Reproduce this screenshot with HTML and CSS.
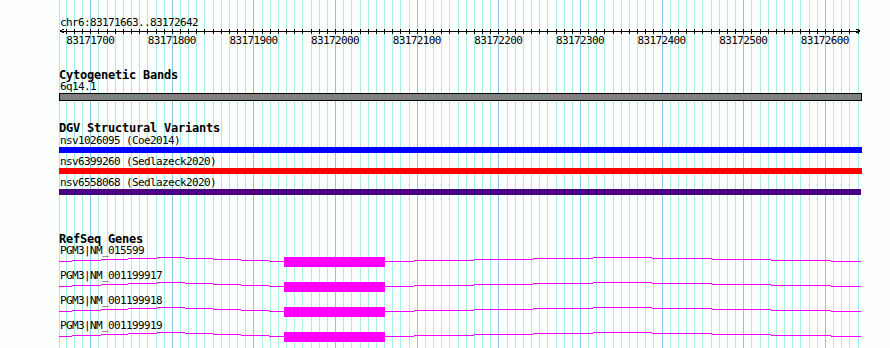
FILE: index.html
```html
<!DOCTYPE html>
<html lang="en">
<head>
<meta charset="utf-8">
<title>Genome browser tracks</title>
<link rel="stylesheet" href="styles.css">
</head>
<body>
<div class="panel">
  <svg class="grid" id="grid" width="890" height="348" viewBox="0 0 890 348" shape-rendering="crispEdges"></svg>
  <div class="content">
    <section class="ruler">
      <div class="txt loc">chr6:83171663..83172642</div>
      <svg class="axis" id="axis" width="890" height="7" viewBox="0 0 890 7" shape-rendering="crispEdges">
        <rect x="60" y="3" width="800" height="1" fill="#000"/>
        <polyline points="64,1 60,3 64,5" fill="none" stroke="#000" stroke-width="1"/>
        <polyline points="856,1 860,3 856,5" fill="none" stroke="#000" stroke-width="1"/>
      </svg>
      <div class="ticklabels">
        <span>83171700</span><span>83171800</span><span>83171900</span><span>83172000</span><span>83172100</span>
        <span>83172200</span><span>83172300</span><span>83172400</span><span>83172500</span><span>83172600</span>
      </div>
    </section>

    <section class="track cyto">
      <div class="title">Cytogenetic Bands</div>
      <div class="txt">6q14.1</div>
      <div class="band"></div>
    </section>

    <section class="track dgv">
      <div class="title">DGV Structural Variants</div>
      <div class="variant">
        <div class="txt">nsv1026095 (Coe2014)</div>
        <div class="bar bar-blue"></div>
      </div>
      <div class="variant">
        <div class="txt">nsv6399260 (Sedlazeck2020)</div>
        <div class="bar bar-red"></div>
      </div>
      <div class="variant">
        <div class="txt">nsv6558068 (Sedlazeck2020)</div>
        <div class="bar bar-purple"></div>
      </div>
    </section>

    <section class="track refseq">
      <div class="title">RefSeq Genes</div>
      <div class="gene">
        <div class="txt">PGM3|NM_015599</div>
        <svg class="model" width="890" height="14" viewBox="0 0 890 14" shape-rendering="crispEdges"><path class="intron" d="M59 5.5H72M72 4.5H101M101 3.5H128M128 2.5H157M157 1.5H185M185 2.5H213M213 3.5H241M241 4.5H269M269 5.5H284M385 5.5H414M414 4.5H474M474 3.5H533M533 2.5H593M593 1.5H652M652 2.5H712M712 3.5H771M771 4.5H831M831 5.5H861"/><rect class="exon" x="284" y="1" width="101" height="10"/></svg>
      </div>
      <div class="gene">
        <div class="txt">PGM3|NM_001199917</div>
        <svg class="model" width="890" height="14" viewBox="0 0 890 14" shape-rendering="crispEdges"><path class="intron" d="M59 5.5H72M72 4.5H101M101 3.5H128M128 2.5H157M157 1.5H185M185 2.5H213M213 3.5H241M241 4.5H269M269 5.5H284M385 5.5H414M414 4.5H474M474 3.5H533M533 2.5H593M593 1.5H652M652 2.5H712M712 3.5H771M771 4.5H831M831 5.5H861"/><rect class="exon" x="284" y="1" width="101" height="10"/></svg>
      </div>
      <div class="gene">
        <div class="txt">PGM3|NM_001199918</div>
        <svg class="model" width="890" height="14" viewBox="0 0 890 14" shape-rendering="crispEdges"><path class="intron" d="M59 5.5H72M72 4.5H101M101 3.5H128M128 2.5H157M157 1.5H185M185 2.5H213M213 3.5H241M241 4.5H269M269 5.5H284M385 5.5H414M414 4.5H474M474 3.5H533M533 2.5H593M593 1.5H652M652 2.5H712M712 3.5H771M771 4.5H831M831 5.5H861"/><rect class="exon" x="284" y="1" width="101" height="10"/></svg>
      </div>
      <div class="gene">
        <div class="txt">PGM3|NM_001199919</div>
        <svg class="model" width="890" height="14" viewBox="0 0 890 14" shape-rendering="crispEdges"><path class="intron" d="M59 5.5H72M72 4.5H101M101 3.5H128M128 2.5H157M157 1.5H185M185 2.5H213M213 3.5H241M241 4.5H269M269 5.5H284M385 5.5H414M414 4.5H474M474 3.5H533M533 2.5H593M593 1.5H652M652 2.5H712M712 3.5H771M771 4.5H831M831 5.5H861"/><rect class="exon" x="284" y="1" width="101" height="10"/></svg>
      </div>
    </section>
  </div>
</div>
<script src="script.js"></script>
</body>
</html>
```

FILE: styles.css
```css
html, body {
  margin: 0;
  padding: 0;
}

body {
  background: #fcfffc;
  width: 890px;
  height: 348px;
  overflow: hidden;
}

.panel {
  position: relative;
  width: 890px;
  height: 348px;
  font-family: "DejaVu Sans Mono", "Liberation Mono", monospace;
  color: #000;
}

.grid {
  position: absolute;
  left: 0;
  top: 0;
  z-index: 0;
}

.grid .minor { fill: #a8ecec; }
.grid .major { fill: #8cc6ea; }

.content {
  position: relative;
  z-index: 1;
  display: flex;
  flex-direction: column;
}

.content svg {
  display: block;
}

.txt {
  font-size: 11px;
  line-height: 11px;
  height: 11px;
  letter-spacing: -0.6226px;
  padding-left: 60px;
  white-space: pre;
}

.title {
  font-size: 12px;
  font-weight: bold;
  line-height: 12px;
  height: 12px;
  letter-spacing: -0.2246px;
  padding-left: 59px;
  white-space: pre;
}

/* ruler */
.ruler {
  display: flex;
  flex-direction: column;
}

.loc {
  margin-top: 17px;
}

.ticklabels {
  display: flex;
  padding-left: 49.4px;
  height: 11px;
  font-size: 11px;
  line-height: 11px;
  letter-spacing: -0.6226px;
  white-space: pre;
}

.ticklabels span {
  flex: 0 0 81.633px;
  text-align: center;
}

/* tracks */
.track {
  display: flex;
  flex-direction: column;
}

.cyto {
  margin-top: 23px;
}

.band {
  box-sizing: border-box;
  margin: 1px 0 0 59px;
  width: 803px;
  height: 8px;
  border: 1px solid #000;
  background: #808080;
}

.dgv {
  margin-top: 21px;
}

.variant {
  display: flex;
  flex-direction: column;
}

.dgv .title {
  margin-bottom: 1px;
}

.bar {
  margin: 1px 0 3px 59px;
  width: 803px;
  height: 6px;
}

.bar-blue { background: #0000ff; }
.bar-red { background: #ff0000; }
.bar-purple { background: #4b0082; width: 802px; }

.refseq {
  margin-top: 35px;
}

.gene {
  display: flex;
  flex-direction: column;
}

.intron {
  fill: none;
  stroke: #ff00ff;
  stroke-width: 1;
}

.exon {
  fill: #ff00ff;
}
```

FILE: script.js
```js
(function () {
  var NS = "http://www.w3.org/2000/svg";
  var grid = document.getElementById("grid");
  var axis = document.getElementById("axis");
  var start = 83171663;
  var scale = 800 / 980;

  function rect(parent, x, y, w, h, cls, fill) {
    var r = document.createElementNS(NS, "rect");
    r.setAttribute("x", x);
    r.setAttribute("y", y);
    r.setAttribute("width", w);
    r.setAttribute("height", h);
    if (cls) r.setAttribute("class", cls);
    if (fill) r.setAttribute("fill", fill);
    parent.appendChild(r);
  }

  rect(grid, 59, 0, 1, 348, "minor");
  for (var pos = 83171670; pos <= 83172640; pos += 10) {
    var x = Math.round(60 + (pos - start) * scale);
    rect(grid, x, 0, 1, 348, pos % 100 === 0 ? "major" : "minor");
    rect(axis, x, 1, 1, 5, null, "#000");
  }
})();
```
